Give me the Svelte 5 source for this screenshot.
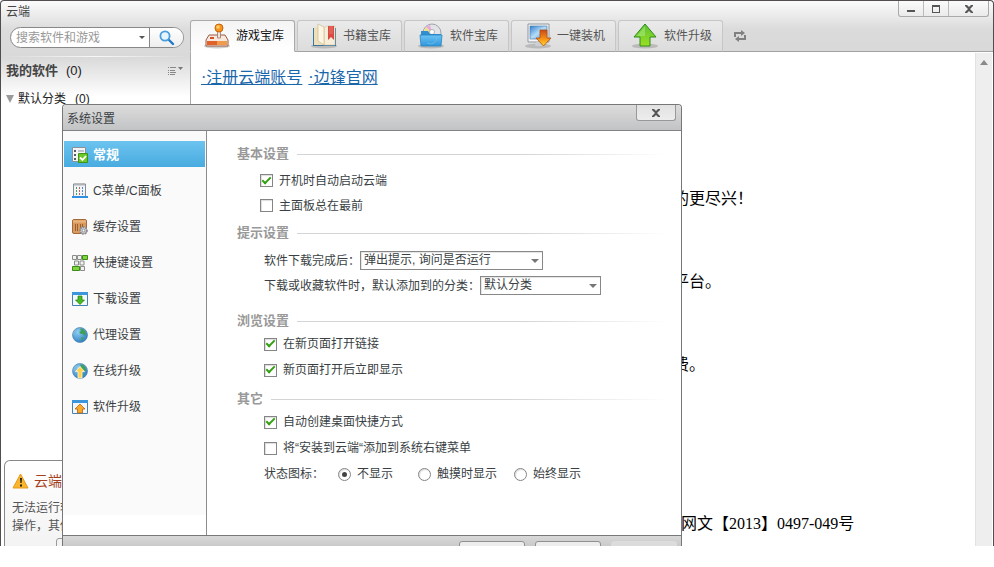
<script>
  const tabs = [
    { id: "games", label: "游戏宝库" },
    { id: "books", label: "书籍宝库" },
    { id: "apps", label: "软件宝库" },
    { id: "install", label: "一键装机" },
    { id: "upgrade", label: "软件升级" },
  ];

  const menu = [
    { id: "general", label: "常规" },
    { id: "panel", label: "C菜单/C面板" },
    { id: "cache", label: "缓存设置" },
    { id: "hotkeys", label: "快捷键设置" },
    { id: "download", label: "下载设置" },
    { id: "proxy", label: "代理设置" },
    { id: "online", label: "在线升级" },
    { id: "software", label: "软件升级" },
  ];

  const iconModes = ["不显示", "触摸时显示", "始终显示"];

  let activeTab = $state("games");
  let activeMenu = $state("general");
  let iconMode = $state("不显示");
  let keyword = $state("");
  let settings = $state({
    autostart: true,
    onTop: false,
    openNew: true,
    showNew: true,
    shortcut: true,
    contextMenu: false,
  });
</script>

{#snippet check(key, label)}
  <label class="row">
    <input type="checkbox" bind:checked={settings[key]} />
    <span>{label}</span>
  </label>
{/snippet}

{#snippet cross()}
  <svg width="10" height="8" viewBox="0 0 10 8">
    <path d="M1 0h2l2 2 2-2h2v1L6 4l3 3v1H7L5 6 3 8H1V7l3-3-3-3z" fill="#555" />
  </svg>
{/snippet}

{#snippet globe()}
  <circle cx="8" cy="8" r="7.5" fill="url(#globe)" stroke="#3a78a8" stroke-width=".6" />
  <path d="M8 1.5l3 .5 2 2 1 3-2 2-1-2-2 0-2-2 2-1z" fill="#3f9f58" />
  <path d="M9 10l3 0-1 3-2 1z" fill="#3f9f58" opacity=".7" />
  <path d="M2 4l3-2 1 1-2 2 1 2-2 1-2-1z" fill="#79b9dd" opacity=".8" />
{/snippet}

<div class="window">
  <header class="titlebar">
    <span class="title">云端</span>
    <div class="controls">
      <button aria-label="最小化">
        <svg width="8" height="8" viewBox="0 0 8 8"><path d="M0 5h8v2H0z" fill="#555" /></svg>
      </button>
      <button aria-label="最大化">
        <svg width="8" height="8" viewBox="0 0 8 8"><path d="M0 0h8v8H0zM1 2v5h6V2z" fill="#555" fill-rule="evenodd" /></svg>
      </button>
      <button class="close" aria-label="关闭">{@render cross()}</button>
    </div>
  </header>

  <div class="body">
    <aside class="sidebar">
      <form class="search" onsubmit={(e) => e.preventDefault()}>
        <input type="text" aria-label="搜索" placeholder="搜索软件和游戏" bind:value={keyword} />
        <span class="caret"></span>
        <button aria-label="搜索">
          <svg width="16" height="16" viewBox="0 0 16 16">
            <path d="M9 9l5 5" stroke="#2278c4" stroke-width="2.4" stroke-linecap="round" />
            <circle cx="6" cy="6" r="4.6" fill="#e4f5ff" stroke="#4a9bda" stroke-width="1.8" />
          </svg>
        </button>
      </form>
      <div class="rule"></div>
      <div class="mine">
        <strong>我的软件</strong>
        <span>(0)</span>
        <button class="list-menu" aria-label="排列方式">
          <svg width="15" height="10" viewBox="0 0 15 10">
            <path d="M0 1.500h1M2 1.500h6M0 4.500h1M2 4.500h5M0 6.500h1M2 6.500h6M0 8.500h1M2 8.500h5" stroke="#888" />
            <path d="M10 1h5l-2.500 3z" fill="#777" />
          </svg>
        </button>
      </div>
      <div class="group">
        <svg width="8" height="8" viewBox="0 0 8 8"><path d="M0 0h8L4 8z" fill="#9a9a9a" /></svg>
        <span>默认分类</span>
        <span>(0)</span>
      </div>

      <section class="tip">
        <h2>
          <svg width="17" height="16" viewBox="0 0 17 16">
            <path d="M8.500 1L16 15H1z" fill="#fbb52c" stroke="#e39a1c" stroke-linejoin="round" />
            <path d="M8 5h2l-.4 5H8.400zM8 11.500h2v2H8z" fill="#222" />
          </svg>
          云端
        </h2>
        <p>无法运行软件</p>
        <p>操作，其他</p>
        <button aria-label="确定"></button>
      </section>
    </aside>

    <main>
      <nav class="tabs">
        {#each tabs as tab}
          <button class="tab" class:active={activeTab === tab.id} onclick={() => (activeTab = tab.id)}>
            <svg width="28" height="26" viewBox="0 0 28 26">
              <ellipse cx="14" cy="23" rx="13" ry="2.500" fill="#777" opacity=".35" />
              {#if tab.id === "games"}
                <path d="M6 12h16l3 5v6H3v-6z" fill="#f8e9df" stroke="#9c5a42" />
                <path d="M4 18h20v4H4z" fill="#e0622a" />
                <path d="M14 18h10v4H14z" fill="#f09a4c" />
                <path d="M7 14h4v2H7z" fill="#d6502a" />
                <path d="M14.500 8h3v7h-3z" fill="#efe5dd" stroke="#9c7462" stroke-width=".8" />
                <circle cx="16" cy="5" r="4" fill="#f6941d" stroke="#c9640c" />
                <circle cx="15" cy="4" r="1.800" fill="#fdce6a" />
              {:else if tab.id === "books"}
                <path d="M3 5h23v18H3z" fill="#39779f" />
                <path d="M4 4h10v18H4z" fill="#efe0bd" />
                <path d="M14 5l3-2h8v19H14z" fill="#f7edd8" stroke="#d4c29e" stroke-width=".6" />
                <path d="M8 1l6 3v18l-6-4z" fill="#fdf6e4" stroke="#cdb88d" stroke-width=".7" />
                <path d="M18 3h6v14l-3-3-3 3z" fill="#d94a43" />
                <path d="M20 3v8M22 3v8" stroke="#f08a80" stroke-width=".7" />
              {:else if tab.id === "apps"}
                <circle cx="15" cy="10" r="9" fill="#e1e3e8" stroke="#a0a4aa" />
                <path d="M15 10L9 4l4-2z" fill="#e7a8dc" />
                <path d="M15 10l-8-2 2-4z" fill="#f1df8c" />
                <circle cx="15" cy="9" r="2.500" fill="#fff" stroke="#999" stroke-width=".7" />
                <path d="M4 8h7l2 3h11v3H4z" fill="#2f8fcf" />
                <path d="M3 12h22l-1 11H4z" fill="url(#folder)" stroke="#2a84bf" stroke-width=".8" />
                <path d="M10 20a6 5 0 0 0 9-6" fill="none" stroke="#6fbfec" stroke-width=".7" />
              {:else if tab.id === "install"}
                <path d="M4 1h21v18H4z" fill="#f3f5f7" stroke="#8e979f" />
                <path d="M6 3h17v13H6z" fill="url(#screen)" stroke="#4a75a2" stroke-width=".6" />
                <path d="M12 19h6l1 4h-8z" fill="#cbd0d4" />
                <path d="M16 7h7v8h4l-7.500 8L12 15h4z" fill="url(#fire)" stroke="#b14c0c" stroke-width=".8" />
              {:else}
                <path d="M14 1l11 13h-6v9H9v-9H3z" fill="url(#green)" stroke="#2f8b1b" stroke-linejoin="round" />
                <path d="M14 3v10H6z" fill="#a3e87b" opacity=".6" />
              {/if}
            </svg>
            {tab.label}
          </button>
        {/each}
        <button class="refresh" aria-label="刷新">
          <svg width="12" height="12" viewBox="0 0 12 12">
            <path d="M1 7V3h7M11 5v4H4" fill="none" stroke="#808080" stroke-width="2" />
            <path d="M7 0l4 3-4 3zM5 6L1 9l4 3z" fill="#808080" />
          </svg>
        </button>
      </nav>

      <div class="content">
        <article>
          <div class="links">
            <a href="#register">·注册云端账号</a>
            <a href="#site">·边锋官网</a>
          </div>
          <p>的更尽兴！</p>
          <p>平台。</p>
          <p>费。</p>
          <p class="license">网文【2013】0497-049号</p>
        </article>
        <div class="scrollbar">
          <svg width="8" height="5" viewBox="0 0 8 5"><path d="M4 0l4 5H0z" fill="#888" /></svg>
        </div>
      </div>
    </main>
  </div>

  <div class="dialog" role="dialog" aria-labelledby="dialog-title">
    <header>
      <span id="dialog-title">系统设置</span>
      <button class="dialog-close" aria-label="关闭">{@render cross()}</button>
    </header>

    <div class="dialog-body">
      <nav class="menu">
        {#each menu as item}
          <button class:active={activeMenu === item.id} onclick={() => (activeMenu = item.id)}>
            <svg width="16" height="16" viewBox="0 0 16 16">
              {#if item.id === "general"}
                <path d="M.5.5h13v14H.5z" fill="#f4f4f6" stroke="#8c9199" />
                <path d="M2 3h2v2H2zM2 7h2v2H2zM2 11h2v2H2z" fill="#555b66" />
                <path d="M6 4h6M6 8h3" stroke="#8b929c" />
                <path d="M6.500 6.500h9v9h-9z" fill="#6cc82a" stroke="#3f9413" />
                <path d="M8 10.500l2.500 2.500L14 9" fill="none" stroke="#fff" stroke-width="1.800" />
              {:else if item.id === "panel"}
                <path d="M1.500 1h12v13h-12z" fill="#f3f4f6" stroke="#8a8f96" />
                <path d="M2 1.500h11" stroke="#aeb3ba" stroke-width="2" />
                <path d="M4.500 4v8" stroke="#3fa565" stroke-dasharray="2 1" />
                <path d="M7.500 4v8" stroke="#cf5666" stroke-dasharray="2 1" />
                <path d="M10.500 4v8" stroke="#4f86cf" stroke-dasharray="2 1" />
                <path d="M0 13h16v2H0z" fill="#2f8fe0" />
              {:else if item.id === "cache"}
                <rect x=".5" y=".5" width="14" height="14" rx="1.500" fill="#d99a5e" stroke="#a56a38" />
                <path d="M1 2.500h13" stroke="#eab67f" stroke-width="2" />
                <path d="M3.500 5v7M5.500 5v7M8.500 5v7M10.500 5v7" stroke="#9b6231" />
                <circle cx="11.500" cy="11.500" r="3.400" fill="#c9ccd0" stroke="#858a90" stroke-width="1.800" stroke-dasharray="1.500 1" />
                <circle cx="11.500" cy="11.500" r="1.300" fill="#fff" stroke="#7b8087" stroke-width=".7" />
              {:else if item.id === "hotkeys"}
                <path d="M.5.5h4v4h-4zM5.500.5h4v4h-4zM2.500 6h4v4h-4zM8 6h4v4H8zM8.500 11.500h4v4h-4z" fill="#f2f2f2" stroke="#888d88" />
                <path d="M10.500.5h5v4h-5zM.5 11.500h7v4h-7z" fill="#7ed63c" stroke="#3f8a18" />
              {:else if item.id === "download" || item.id === "software"}
                <path d="M.5 1.500h15v13H.5z" fill="#f4f8fc" stroke="#4581b4" />
                <path d="M0 1h16v3H0z" fill="#3b96dc" />
                {#if item.id === "download"}
                  <path d="M6 5h4v4h2.500L8 13.500 3.500 9H6z" fill="#48bb21" stroke="#278009" stroke-width=".7" />
                {:else}
                  <path d="M8 5l5 5h-2.500v4h-5v-4H3z" fill="#f8ab2a" stroke="#b5620c" stroke-width=".8" />
                {/if}
              {:else if item.id === "proxy"}
                {@render globe()}
              {:else}
                {@render globe()}
                <path d="M8 3.500l4.500 5H10V15H6V8.500H3.500z" fill="#ffcf4d" stroke="#fff6dc" stroke-width=".8" />
              {/if}
            </svg>
            {item.label}
          </button>
        {/each}
      </nav>

      <div class="pane">
        <section class="basic">
          <h3>基本设置</h3>
          {@render check("autostart", "开机时自动启动云端")}
          {@render check("onTop", "主面板总在最前")}
        </section>

        <section class="prompt">
          <h3>提示设置</h3>
          <div class="row">
            <label for="after-download">软件下载完成后：</label>
            <span class="select wide">
              <select id="after-download">
                <option>弹出提示, 询问是否运行</option>
              </select>
            </span>
          </div>
          <div class="row">
            <label for="category">下载或收藏软件时，默认添加到的分类：</label>
            <span class="select">
              <select id="category">
                <option>默认分类</option>
              </select>
            </span>
          </div>
        </section>

        <section class="browse">
          <h3>浏览设置</h3>
          {@render check("openNew", "在新页面打开链接")}
          {@render check("showNew", "新页面打开后立即显示")}
        </section>

        <section class="other">
          <h3>其它</h3>
          {@render check("shortcut", "自动创建桌面快捷方式")}
          {@render check("contextMenu", "将“安装到云端“添加到系统右键菜单")}
          <div class="row modes" role="radiogroup" aria-label="状态图标">
            <span class="modes-label">状态图标：</span>
            {#each iconModes as mode}
              <label>
                <input type="radio" name="icon-mode" value={mode} bind:group={iconMode} />
                <span>{mode}</span>
              </label>
            {/each}
          </div>
        </section>
      </div>
    </div>

    <footer>
      <button aria-label="确定"></button>
      <button aria-label="取消"></button>
      <button aria-label="应用" disabled></button>
    </footer>
  </div>
</div>

<!-- gradients shared by the icons -->
<svg class="defs" width="0" height="0" aria-hidden="true">
  <defs>
    <linearGradient id="folder" x1="0" y1="0" x2="0" y2="1">
      <stop offset="0" stop-color="#6cc3f3" /><stop offset="1" stop-color="#2f97db" />
    </linearGradient>
    <linearGradient id="screen" x1="0" y1="0" x2="1" y2="1">
      <stop offset="0" stop-color="#2f7fd0" /><stop offset=".5" stop-color="#b5dcf8" /><stop offset="1" stop-color="#4a95dc" />
    </linearGradient>
    <linearGradient id="fire" x1="0" y1="0" x2="0" y2="1">
      <stop offset="0" stop-color="#c84a1c" /><stop offset=".5" stop-color="#f58a14" /><stop offset="1" stop-color="#ffd92e" />
    </linearGradient>
    <linearGradient id="green" x1="0" y1="0" x2="0" y2="1">
      <stop offset="0" stop-color="#5cc036" /><stop offset="1" stop-color="#9be022" />
    </linearGradient>
    <radialGradient id="globe" cx=".35" cy=".3" r=".8">
      <stop offset="0" stop-color="#8fd0f5" /><stop offset="1" stop-color="#2a78bd" />
    </radialGradient>
  </defs>
</svg>

<style>
  :global(body) {
    margin: 0;
    background: #fff;
  }

  .window {
    position: relative;
    box-sizing: border-box;
    display: flex;
    flex-direction: column;
    height: calc(100vh - 21px);
    overflow: hidden;
    border: 1px solid #504c50;
    border-bottom: 0;
    border-radius: 4px 4px 0 0;
    background: linear-gradient(#fbfbfb, #dcdcdc 28px, #d9d9d9 56px, #fff 96px);
    color: #3a3f44;
    font: 12px/18px "Liberation Sans", "Noto Sans CJK SC", sans-serif;
  }

  button,
  input,
  select {
    box-sizing: border-box;
    margin: 0;
    padding: 0;
    border: 0;
    background: none;
    color: inherit;
    font: inherit;
  }

  svg {
    display: block;
    flex: none;
  }

  .titlebar {
    display: flex;
    justify-content: space-between;
    height: 19px;
    flex: none;
  }

  .title {
    padding-left: 5px;
    line-height: 22px;
    color: #444;
  }

  .controls {
    display: flex;
    height: 16px;
    margin-right: 4px;
    border: 1px solid #aaa;
    border-top: 0;
    border-radius: 0 0 3px 3px;
    box-sizing: border-box;
  }

  .controls button {
    display: grid;
    place-items: center;
    width: 25px;
    border-right: 1px solid #bbb;
  }

  .controls .close {
    width: 39px;
    border-right: 0;
  }

  .body {
    display: flex;
    flex: 1;
    min-height: 0;
  }

  .sidebar {
    display: flex;
    flex-direction: column;
    width: 189px;
    flex: none;
    padding-top: 7px;
    box-sizing: border-box;
  }

  .search {
    display: flex;
    align-items: center;
    box-sizing: border-box;
    height: 21px;
    margin: 0 6px 0 9px;
    border: 1px solid #888;
    border-radius: 11px;
    background: #fff;
    overflow: hidden;
  }

  .search input {
    flex: 1;
    min-width: 0;
    height: 19px;
    padding-left: 5px;
    outline: none;
  }

  .search input::placeholder {
    color: #999;
    opacity: 1;
  }

  .caret {
    margin-right: 4px;
    border: 3px solid transparent;
    border-top: 3px solid #555;
    border-bottom: 0;
  }

  .search button {
    display: grid;
    place-items: center;
    width: 34px;
    height: 19px;
    border-left: 1px solid #888;
    background: linear-gradient(#fff, #eee);
  }

  .rule {
    height: 1px;
    flex: none;
    margin-top: 8px;
    background: linear-gradient(90deg, transparent, #f8f8f8 50%, transparent);
  }

  .mine {
    display: flex;
    align-items: center;
    gap: 8px;
    height: 28px;
    padding: 0 7px 0 5px;
    font-size: 13px;
    color: #222;
  }

  .mine strong {
    color: #444;
  }

  .list-menu {
    margin-left: auto;
  }

  .group {
    display: flex;
    align-items: center;
    height: 28px;
    padding-left: 5px;
    color: #222;
  }

  .group span {
    margin-right: 5px;
    margin-left: 4px;
  }

  .tip {
    box-sizing: border-box;
    height: 86px;
    margin: auto 3px 0;
    padding: 10px 7px 0;
    overflow: hidden;
    border: 1px solid #888;
    border-bottom: 0;
    border-radius: 6px 6px 0 0;
    background: linear-gradient(#fff, #f3f3f3);
    color: #555;
  }

  .tip h2 {
    display: flex;
    align-items: center;
    gap: 5px;
    margin: 0 0 8px;
    color: #a5411c;
    font-size: 14px;
    font-weight: normal;
    line-height: 20px;
  }

  .tip p {
    margin: 0;
    white-space: nowrap;
  }

  .tip button {
    display: block;
    width: 70px;
    height: 22px;
    margin: 3px auto 0 44px;
    border: 1px solid #999;
    border-radius: 3px;
  }

  main {
    display: flex;
    flex-direction: column;
    flex: 1;
    min-width: 0;
  }

  .tabs {
    display: flex;
    gap: 2px;
    height: 32px;
    flex: none;
    background: linear-gradient(transparent, #d9d9d9);
    box-shadow: inset 0 -1px #a2a2a2;
  }

  .tab {
    display: flex;
    align-items: center;
    gap: 5px;
    width: 105px;
    padding: 0 0 0 12px;
    border: 1px solid #c6c6c6;
    border-bottom-color: #a2a2a2;
    border-radius: 3px 3px 0 0;
    background: linear-gradient(#eaeaea, #dcdcdc);
    color: #555;
    white-space: nowrap;
  }

  .tab.active {
    border-color: #aaa;
    border-bottom-color: #fff;
    background: linear-gradient(#f4f4f4, #fff);
    color: #111;
  }

  .refresh {
    margin-left: 9px;
  }

  .content {
    display: flex;
    flex: 1;
    min-height: 0;
    border-left: 1px solid #aaa;
    background: #fff;
  }

  article {
    flex: 1;
    min-width: 0;
    padding: 16px 0 0 482px;
    overflow: hidden;
    color: #000;
    font: 16px/20px "Liberation Serif", "Noto Sans CJK SC", serif;
  }

  .links {
    display: flex;
    gap: 6px;
    margin: 0 0 101px -472px;
  }

  .links a {
    color: #1a66ab;
  }

  article p {
    margin: 0 0 63px;
    white-space: nowrap;
  }

  article .license {
    margin-top: 139px;
    padding-left: 8px;
  }

  .scrollbar {
    width: 17px;
    flex: none;
    margin: 1px 1px 0 0;
    border-left: 1px solid #e2e2e2;
    background: #eee;
    box-sizing: border-box;
  }

  .scrollbar svg {
    margin: 7px auto 0;
  }

  .dialog {
    position: absolute;
    top: 103px;
    bottom: 0;
    left: 61px;
    display: flex;
    flex-direction: column;
    box-sizing: border-box;
    width: 620px;
    max-width: calc(100% - 61px);
    overflow: hidden;
    border: 1px solid #757779;
    border-bottom: 0;
    border-radius: 4px 4px 0 0;
    background: #fff;
  }

  .dialog header {
    display: flex;
    justify-content: space-between;
    align-items: flex-start;
    box-sizing: border-box;
    height: 26px;
    flex: none;
    padding: 0 5px 0 4px;
    border-bottom: 1px solid #808284;
    background: linear-gradient(#dcdcdd, #c2c3c4);
    line-height: 28px;
  }

  .dialog-close {
    display: grid;
    place-items: center;
    width: 40px;
    height: 16px;
    border: 1px solid #999;
    border-top: 0;
    border-radius: 0 0 3px 3px;
    background: linear-gradient(#e2e2e3, #ededed);
  }

  .dialog-body {
    display: flex;
    flex: 1;
    min-height: 0;
  }

  .menu {
    display: flex;
    flex-direction: column;
    gap: 10px;
    width: 143px;
    flex: none;
    box-sizing: border-box;
    margin-bottom: 20px;
    padding: 10px 1px 0;
    background: #fafafa;
  }

  .menu button {
    display: flex;
    align-items: center;
    gap: 5px;
    height: 26px;
    padding: 1px 0 0 8px;
    text-align: left;
  }

  .menu .active {
    background: linear-gradient(#6cc3ef, #48abdf);
    color: #fff;
    font-size: 13px;
    font-weight: bold;
  }

  .pane {
    flex: 1;
    min-width: 0;
    padding: 13px 12px 0 30px;
    border-left: 1px solid #8a8c8e;
  }

  h3 {
    display: flex;
    align-items: center;
    gap: 8px;
    margin: 0;
    color: #999;
    font-size: 13px;
    line-height: 20px;
  }

  h3::after {
    content: "";
    flex: 1;
    height: 1px;
    background: linear-gradient(90deg, #d4d4d4 60%, transparent);
  }

  .row {
    display: flex;
    align-items: center;
    height: 26px;
    padding-left: 27px;
    white-space: nowrap;
  }

  .row input {
    appearance: none;
    display: grid;
    place-items: center;
    width: 13px;
    height: 13px;
    flex: none;
    margin-right: 6px;
    border: 1px solid #858585;
    background: #fff;
    box-shadow: inset 1px 1px 1px #ddd;
  }

  .row input[type="checkbox"]:checked::before {
    content: "";
    width: 7px;
    height: 3px;
    margin-bottom: 3px;
    border: solid #35a012;
    border-width: 0 0 2px 2px;
    transform: rotate(-45deg);
  }

  .row input[type="radio"] {
    border-radius: 50%;
  }

  .row input[type="radio"]:checked::before {
    content: "";
    width: 5px;
    height: 5px;
    border-radius: 50%;
    background: #444;
  }

  .basic .row,
  .prompt .row {
    height: 25px;
  }

  .basic .row {
    padding-left: 23px;
  }

  .basic h3 {
    margin-bottom: 4px;
  }

  .basic,
  .prompt h3 {
    margin-bottom: 5px;
  }

  .prompt {
    margin-bottom: 13px;
  }

  .browse {
    margin-bottom: 6px;
  }

  .select {
    position: relative;
    width: 121px;
  }

  .select.wide {
    width: 183px;
  }

  .select::after {
    content: "";
    position: absolute;
    top: 8px;
    right: 4px;
    border: 4px solid transparent;
    border-top-color: #777;
    border-bottom: 0;
    pointer-events: none;
  }

  select {
    display: block;
    appearance: none;
    width: 100%;
    height: 19px;
    padding-left: 3px;
    border: 1px solid #888;
    background: #fff;
    box-shadow: inset 1px 1px 1px #e4e4e4;
    line-height: 17px;
  }

  .modes-label {
    width: 74px;
  }

  .modes label {
    display: flex;
    align-items: center;
    margin-right: 17px;
  }

  .modes label:nth-of-type(1) {
    margin-right: 25px;
  }

  .dialog footer {
    display: flex;
    justify-content: flex-end;
    gap: 10px;
    box-sizing: border-box;
    height: 11px;
    flex: none;
    overflow: hidden;
    padding: 5px 4px 0;
    border-top: 1px solid #757779;
    background: linear-gradient(#d8d8d8, #cacaca);
  }

  footer button {
    width: 66px;
    height: 22px;
    border: 1px solid #909090;
    border-radius: 3px;
    background: #ededed;
  }

  footer button:disabled {
    border-color: #dcdcdc;
    background: #dcdcdc;
  }

  .defs {
    position: absolute;
  }
</style>
